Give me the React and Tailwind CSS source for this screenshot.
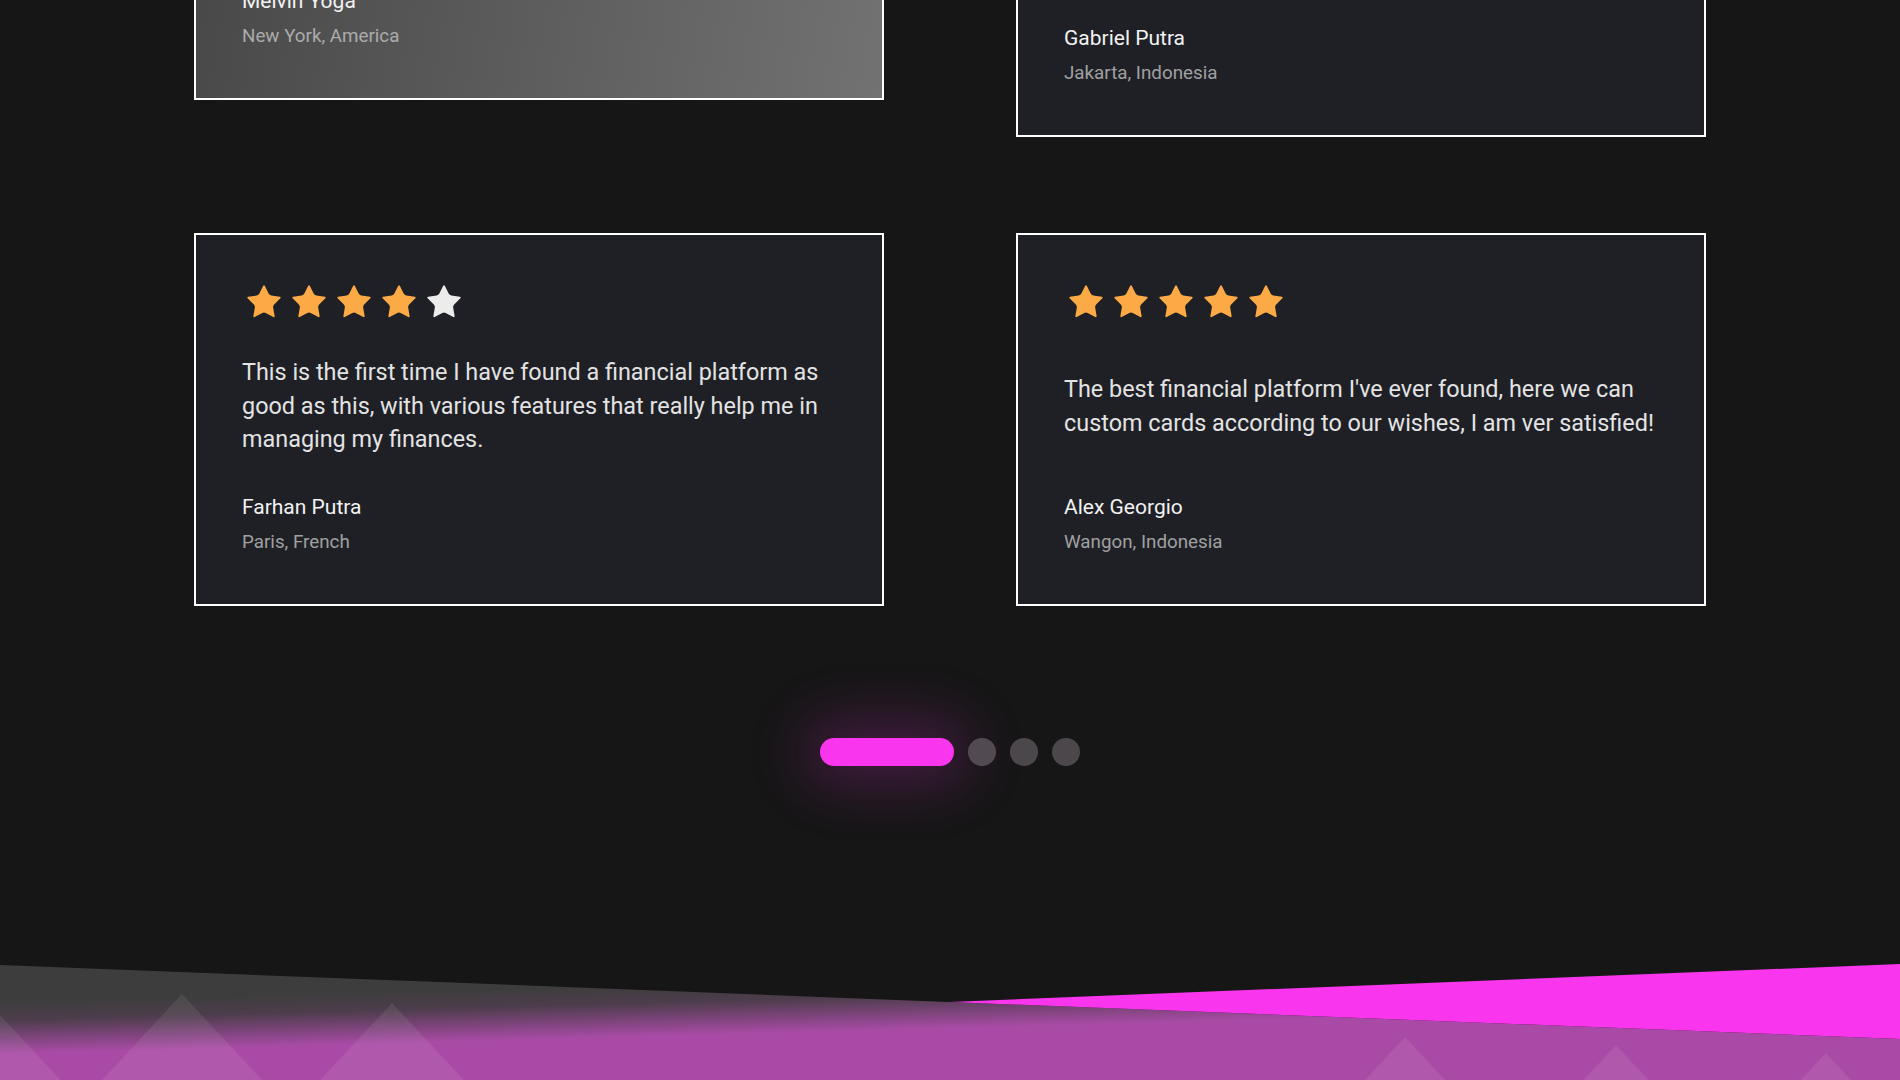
import React from "react";

const STAR_PATH =
  "M11.525 2.295a.53.53 0 0 1 .95 0l2.31 4.679a2.123 2.123 0 0 0 1.595 1.16l5.166.756a.53.53 0 0 1 .294.904l-3.736 3.638a2.123 2.123 0 0 0-.611 1.878l.882 5.14a.53.53 0 0 1-.771.56l-4.618-2.428a2.122 2.122 0 0 0-1.973 0L6.396 21.01a.53.53 0 0 1-.77-.56l.881-5.139a2.122 2.122 0 0 0-.611-1.879L2.16 9.795a.53.53 0 0 1 .294-.906l5.165-.755a2.122 2.122 0 0 0 1.597-1.16z";

function Star({ filled }) {
  return (
    <svg viewBox="0 0 24 24" className="w-[40px] h-[40px] shrink-0" fill={filled ? "#fbaa45" : "#ececec"}>
      <path d={STAR_PATH} />
    </svg>
  );
}

function Stars({ count }) {
  return (
    <div className="flex gap-[5px] pl-[2px] -mt-[1px] -mb-[1px]">
      {[0, 1, 2, 3, 4].map((i) => (
        <Star key={i} filled={i < count} />
      ))}
    </div>
  );
}

function ReviewCard({ rating, text, name, place, active }) {
  return (
    <div
      className={
        active
          ? "h-[373px] flex flex-col border-2 border-white bg-[linear-gradient(100deg,#464646,#727272)] pt-[48px] px-[46px] pb-[48px] -translate-y-[37px]"
          : "h-[373px] flex flex-col border-2 border-white bg-[#1f2026] pt-[48px] px-[46px] pb-[48px]"
      }
    >
      <Stars count={rating} />
      <div className="flex-1 flex items-center py-[35px]">
        <p className="text-[23.4px] leading-[33.6px] text-[#e3e3e3]">{text}</p>
      </div>
      <div className="text-[21px] leading-[31px] text-[#f2f2f2]">{name}</div>
      <div className={active ? "mt-[5px] text-[18.8px] leading-[28px] text-[#ababab]" : "mt-[5px] text-[18.8px] leading-[28px] text-[#a0a0a0]"}>
        {place}
      </div>
    </div>
  );
}

const reviews = [
  {
    rating: 5,
    text: "Managing money has never been this easy, the dashboard is clean and every feature works exactly the way I need it to.",
    name: "Melvin Yoga",
    place: "New York, America",
    active: true,
  },
  {
    rating: 5,
    text: "Transfers are fast and the cards are beautiful, I can track all of my spending in one place.",
    name: "Gabriel Putra",
    place: "Jakarta, Indonesia",
  },
  {
    rating: 4,
    text: "This is the first time I have found a financial platform as good as this, with various features that really help me in managing my finances.",
    name: "Farhan Putra",
    place: "Paris, French",
  },
  {
    rating: 5,
    text: "The best financial platform I've ever found, here we can custom cards according to our wishes, I am ver satisfied!",
    name: "Alex Georgio",
    place: "Wangon, Indonesia",
  },
];

function Mountain({ ax, ay }) {
  const h = 116 - ay;
  const w = 0.93 * h;
  return <polygon points={`${ax},${ay} ${ax + w},116 ${ax - w},116`} fill="#ffffff" fillOpacity="0.075" />;
}

function FooterShape() {
  return (
    <svg viewBox="0 0 1900 116" preserveAspectRatio="none" className="block w-full h-[116px]">
      <defs>
        <linearGradient id="footGrad" gradientUnits="userSpaceOnUse" x1="0" y1="38" x2="1.4" y2="90">
          <stop offset="0" stopColor="#3d3d3d" />
          <stop offset="0.35" stopColor="#4d3d4c" />
          <stop offset="1" stopColor="#a94ba6" />
        </linearGradient>
        <clipPath id="footClip">
          <polygon points="0,1 1900,75 1900,116 0,116" />
        </clipPath>
      </defs>
      <polygon points="0,1 1900,75 1900,116 0,116" fill="url(#footGrad)" />
      <g clipPath="url(#footClip)">
        <Mountain ax={-27} ay={22} />
        <Mountain ax={182} ay={30} />
        <Mountain ax={392} ay={39} />
        <Mountain ax={1405} ay={73} />
        <Mountain ax={1616} ay={81} />
        <Mountain ax={1826} ay={89} />
      </g>
      <polygon points="950,38 1900,0 1900,75" fill="#f936ed" />
    </svg>
  );
}

export default function App() {
  return (
    <div className="flex flex-col w-full h-[1080px] overflow-hidden bg-[#161616] font-['Roboto',sans-serif]">
      <section className="mt-[-236px] mx-auto w-[1512px] grid grid-cols-2 items-stretch gap-x-[132px] gap-y-[96px] shrink-0">
        {reviews.map((r) => (
          <ReviewCard key={r.name} {...r} />
        ))}
      </section>

      <div className="mt-[132px] flex justify-center items-center gap-[14px] shrink-0">
        <div className="w-[134px] h-[28px] rounded-full bg-[#f936ed] shadow-[0_0_60px_16px_rgba(249,54,237,0.22)]" />
        <div className="w-[28px] h-[28px] rounded-full bg-[#524a51]" />
        <div className="w-[28px] h-[28px] rounded-full bg-[#4b474a]" />
        <div className="w-[28px] h-[28px] rounded-full bg-[#4b474a]" />
      </div>

      <div className="mt-[198px] shrink-0">
        <FooterShape />
      </div>
    </div>
  );
}
